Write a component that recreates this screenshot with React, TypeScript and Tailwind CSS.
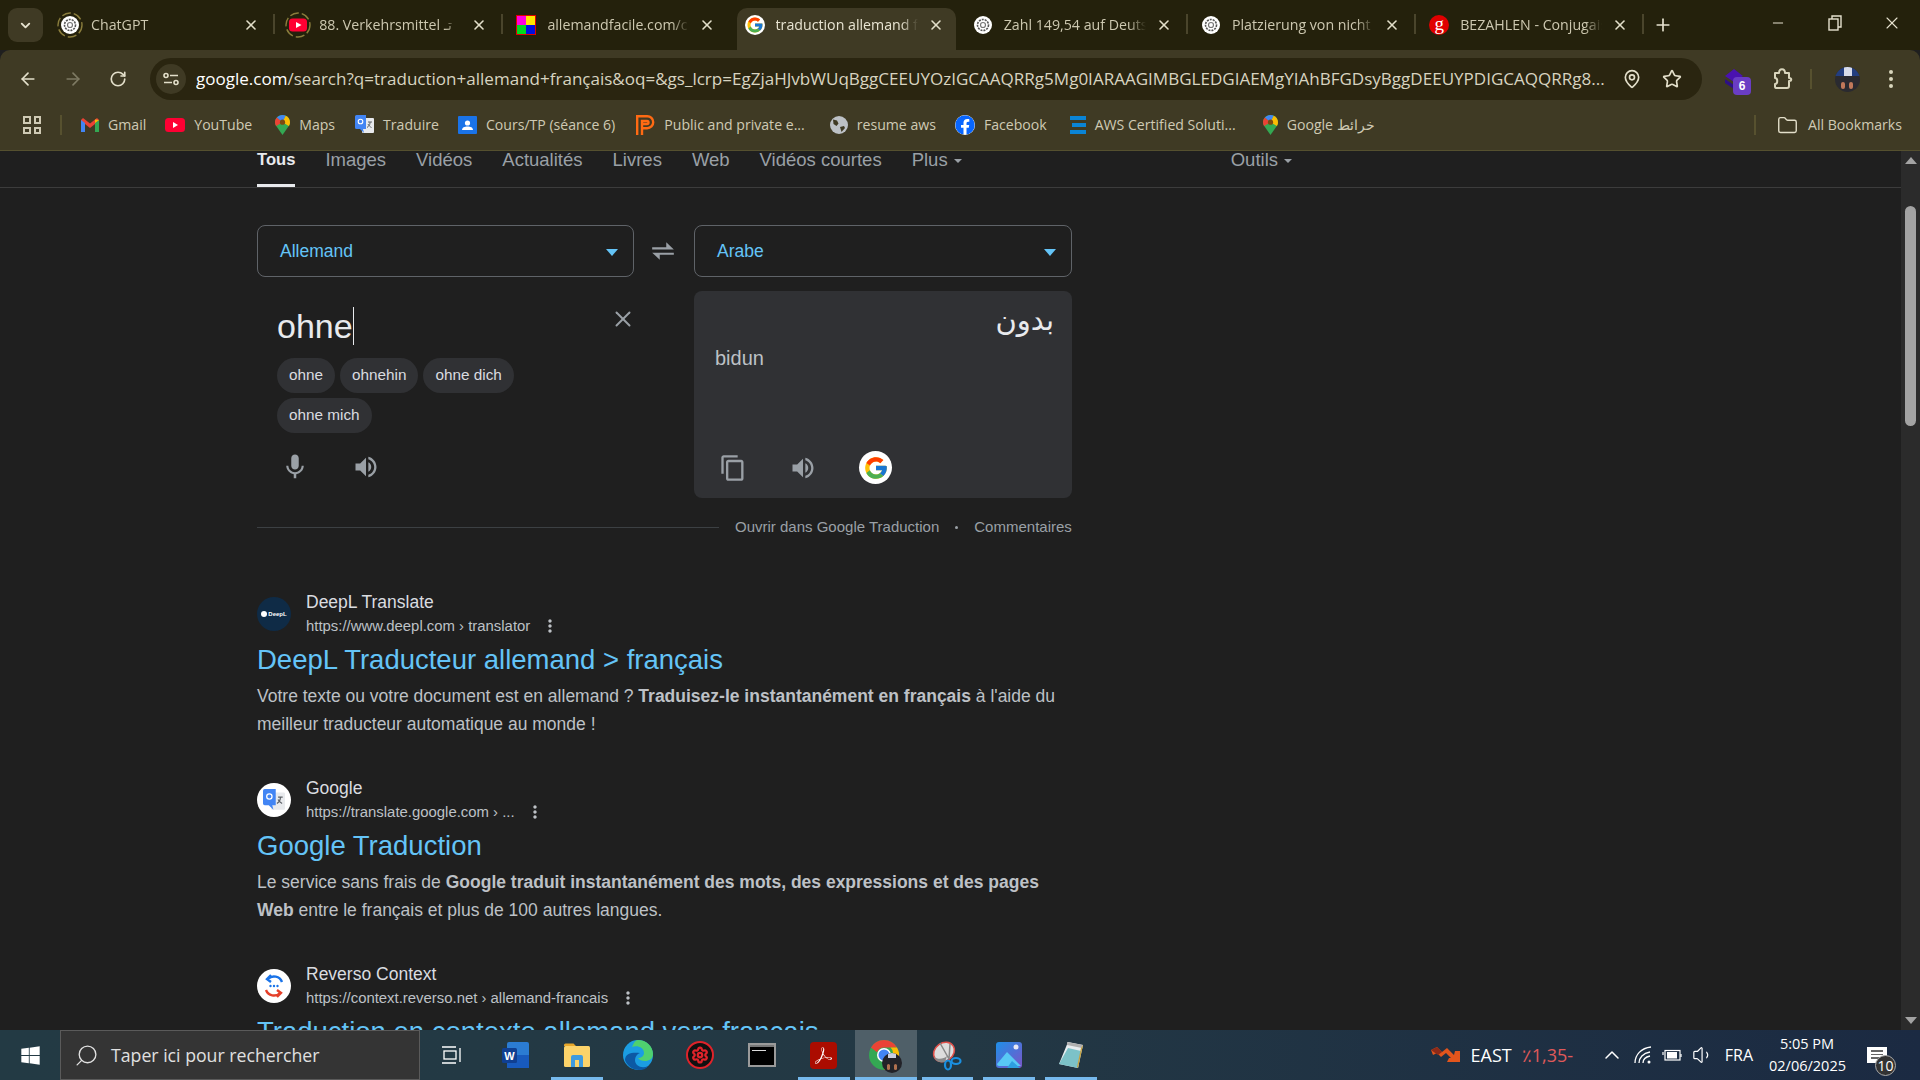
import { ArrowLeft, ArrowRight, ChevronDown, ChevronUp, Folder, MapPin, Minus, Plus, RotateCw, Search, Settings, Star, Volume1, X } from "lucide-react";
import type { ReactNode } from "react";
import { FaFacebook, FaWindows } from "react-icons/fa";
import { FcGoogle } from "react-icons/fc";
import { MdContentCopy, MdMic, MdMoreVert, MdVolumeUp } from "react-icons/md";
import { SiAdobeacrobatreader } from "react-icons/si";

const uiFont = "font-['Open_Sans',sans-serif]";

function GptFav({ ring }: { ring?: boolean }) {
  return (
    <svg width="26" height="26" viewBox="0 0 26 26">
      {ring && <circle cx="13" cy="13" r="12" fill="none" stroke="#8a7d3c" strokeWidth="1.4" strokeDasharray="9 3" />}
      <circle cx="13" cy="13" r="9" fill="#fff" />
      <circle cx="13" cy="13" r="5.5" fill="none" stroke="#555" strokeWidth="1.6" strokeDasharray="2 1" />
      <circle cx="13" cy="13" r="2.5" fill="none" stroke="#777" strokeWidth="1.2" />
    </svg>
  );
}

function YtFav({ ring }: { ring?: boolean }) {
  return (
    <svg width="26" height="26" viewBox="0 0 26 26">
      {ring && <circle cx="13" cy="13" r="12" fill="none" stroke="#8a7d3c" strokeWidth="1.4" strokeDasharray="9 3" />}
      <rect x="4" y="6.5" width="18" height="13" rx="3.5" fill="#ff0033" />
      <path d="M11 10l5.5 3-5.5 3z" fill="#fff" />
    </svg>
  );
}

function QuadFav() {
  return (
    <div className="grid h-[20px] w-[20px] grid-cols-2 border border-[#e00000] bg-[#e00000]">
      <div className="bg-[#ff00e0]" />
      <div className="bg-[#ffe600]" />
      <div className="bg-[#00d820]" />
      <div className="bg-[#0010e0]" />
    </div>
  );
}

function ConjFav() {
  return (
    <div className="flex h-[20px] w-[20px] items-center justify-center rounded-full bg-[#e00000] pb-[3px] font-['Liberation_Serif',serif] text-[19px] leading-none text-white">
      g
    </div>
  );
}

const tabs: { title: string; icon: ReactNode; active?: boolean }[] = [
  { title: "ChatGPT", icon: <GptFav ring /> },
  { title: "88. Verkehrsmittel تـ", icon: <YtFav ring /> },
  { title: "allemandfacile.com/c", icon: <QuadFav /> },
  { title: "traduction allemand f", icon: <FcGoogle size={20} className="rounded-full bg-white p-[1px]" />, active: true },
  { title: "Zahl 149,54 auf Deutsch", icon: <GptFav /> },
  { title: "Platzierung von nicht", icon: <GptFav /> },
  { title: "BEZAHLEN - Conjugaison", icon: <ConjFav /> },
];

function TabStrip() {
  return (
    <div className={`flex h-[50px] items-end bg-[#24210c] pl-2 text-[14.200px] ${uiFont}`}>
      <div className="mb-[8px] flex h-[34px] w-[35px] items-center justify-center rounded-[9px] bg-[#3f3a24] text-[#e6e2cf]">
        <ChevronDown size={15} strokeWidth={3} />
      </div>
      <div className="ml-[4px] flex h-[42px]">
        {tabs.map((t, i) => (
          <div key={i} className="relative flex h-full w-[228.2px] items-center pb-[8px]">
            {t.active && <div className="absolute inset-y-0 left-[5px] right-[4px] rounded-t-[10px] bg-[#3f3a24]" />}
            <div className="relative flex w-[44px] shrink-0 items-center justify-center pl-[2px]">{t.icon}</div>
            <div className={`relative w-[142px] overflow-hidden whitespace-nowrap [mask-image:linear-gradient(to_right,black_88%,transparent)] ${t.active ? "text-[#e8e4d2]" : "text-[#cdc8b0]"}`}>
              {t.title}
            </div>
            <X size={16} strokeWidth={2.4} className="relative ml-[10px] text-[#e3dfca]" />
            {i !== 2 && i !== 3 && <div className="absolute right-0 top-[6px] h-[20px] w-[2px] bg-[#4a452c]" />}
          </div>
        ))}
      </div>
      <div className="mb-[8px] ml-[9px] flex h-[34px] w-[20px] items-center justify-center text-[#e6e2cf]">
        <Plus size={20} strokeWidth={2} />
      </div>
      <div className="ml-auto flex h-[50px] items-center pb-[4px] text-[#e6e2cf]">
        <div className="flex w-[56.5px] justify-center"><Minus size={16} strokeWidth={1.5} /></div>
        <div className="flex w-[56.5px] justify-center">
          <svg width="14" height="16" viewBox="0 0 14 16" fill="none" stroke="currentColor" strokeWidth="1.4">
            <rect x="1" y="4" width="9" height="11" />
            <path d="M4 4V1h9v11h-3" />
          </svg>
        </div>
        <div className="flex w-[57px] justify-center"><X size={20} strokeWidth={1.3} /></div>
      </div>
    </div>
  );
}

function Toolbar() {
  return (
    <div className="flex h-[50px] items-end rounded-t-[10px] bg-[#3f3a24]">
      <div className="flex h-[42px] w-[150px] items-center text-[#e3dfca]">
        <div className="flex w-[55px] justify-center"><ArrowLeft size={20} /></div>
        <div className="flex w-[36px] justify-center text-[#7e7a63]"><ArrowRight size={20} /></div>
        <div className="flex w-[53px] justify-center"><RotateCw size={18} strokeWidth={2.2} /></div>
      </div>
      <div className={`flex h-[42px] w-[1552px] items-center rounded-full bg-[#2a2510] pl-[6px] pr-[20px] ${uiFont}`}>
        <div className="flex h-[30px] w-[30px] shrink-0 items-center justify-center rounded-full bg-[#3f3a24]">
          <svg width="16" height="14" viewBox="0 0 16 14" fill="none" stroke="#e3dfca" strokeWidth="1.6">
            <circle cx="3" cy="3.5" r="2" />
            <path d="M7 3.5h8M1 10.5h8" />
            <circle cx="13" cy="10.5" r="2" />
          </svg>
        </div>
        <div className="ml-[10px] w-[1410px] truncate text-[17.040px] text-[#d8d4c0]">
          <span className="text-white">google.com</span>
          /search?q=traduction+allemand+français&amp;oq=&amp;gs_lcrp=EgZjaHJvbWUqBggCEEUYOzIGCAAQRRg5Mg0IARAAGIMBGLEDGIAEMgYIAhBFGDsyBggDEEUYPDIGCAQQRRg8...
        </div>
        <MapPin size={20} className="ml-[16px] shrink-0 text-[#e3dfca]" />
        <Star size={20} className="ml-[20px] shrink-0 text-[#e3dfca]" />
      </div>
      <div className="flex h-[42px] flex-1 items-center text-[#d9d5bc]">
        <div className="relative ml-[20px] h-[30px] w-[30px]">
          <svg width="24" height="24" viewBox="0 0 24 24" className="absolute left-0 top-[3px]">
            <path d="M12 2l9 7-9 6-9-6z" fill="#4a12b0" />
            <path d="M3 12l9 6 4-2v4l-4 2-9-6z" fill="#2d0f85" />
          </svg>
          <div className="absolute left-[11px] top-[13px] flex h-[18px] w-[18px] items-center justify-center rounded-[4px] bg-[#6a3dc4] text-[12px] font-bold text-white">6</div>
        </div>
        <svg width="21" height="22" viewBox="0 0 21 22" fill="none" stroke="currentColor" strokeWidth="2" strokeLinejoin="round" className="ml-[20px]">
          <path d="M3 5h4c0-5 6-5 6 0h4v5c3 0 3 3 0 3v5a2 2 0 0 1-2 2H4a1.500 1.500 0 0 1-1-1.500V16c3 0 3-6 0-6z" />
        </svg>
        <div className="ml-[17px] h-[20px] w-[2px] bg-[#57512f]" />
        <div className="relative ml-[23px] h-[25px] w-[25px] overflow-hidden rounded-full bg-[#2a2a30]">
          <div className="h-[9px] bg-[#233e80]" />
          <div className="mx-auto -mt-[9px] h-[9px] w-[8px] bg-[#d8dcea]" />
          <div className="absolute bottom-[3px] left-[6px] h-[7px] w-[4px] rounded-full bg-[#c0785a]" />
          <div className="absolute bottom-[3px] left-[14px] h-[7px] w-[4px] rounded-full bg-[#c0785a]" />
        </div>
        <div className="ml-[29px] flex flex-col gap-[3px]">
          <div className="h-[4px] w-[4px] rounded-full bg-[#d9d5bc]" />
          <div className="h-[4px] w-[4px] rounded-full bg-[#d9d5bc]" />
          <div className="h-[4px] w-[4px] rounded-full bg-[#d9d5bc]" />
        </div>
      </div>
    </div>
  );
}

function MapsIcon() {
  return (
    <svg width="15" height="20" viewBox="0 0 15 20">
      <path d="M7.5 0C3.4 0 0 3.2 0 7.2c0 1.5.5 2.7 1.2 3.8L7.5 20l6.3-9c.7-1.1 1.2-2.3 1.2-3.8C15 3.2 11.6 0 7.5 0z" fill="#34a853" />
      <path d="M2 2.6L7.5 7.2 1.2 11C.5 9.9 0 8.7 0 7.2 0 5 1 3.3 2 2.6z" fill="#ea4335" />
      <path d="M2 2.6C3.4 1 5.4 0 7.5 0c1.2 0 2.2.3 3.2.8L7.5 7.2z" fill="#4285f4" />
      <path d="M10.7.8C13.2 2 15 4.4 15 7.2c0 1.5-.5 2.7-1.2 3.8L7.5 7.2z" fill="#fbbc04" />
      <circle cx="7.5" cy="7.2" r="2.6" fill="#7a4a12" />
    </svg>
  );
}

function TranslateIcon({ size = 19 }: { size?: number }) {
  return (
    <svg width={size} height={size} viewBox="0 0 19 19">
      <rect x="7" y="3" width="12" height="15" rx="1" fill="#e8eaed" />
      <path d="M13 7h4M15 7v1c0 2-1.5 3.5-3 4.5M13 9c.6 1.4 2 2.8 3.5 3.5" stroke="#5f6368" strokeWidth="1" fill="none" />
      <path d="M1.5 0H11v14H8l1 4-4-4H1.5A1.5 1.5 0 0 1 0 12.500v-11A1.500 1.500 0 0 1 1.500 0z" fill="#4285f4" />
      <circle cx="5.500" cy="6.500" r="2.300" fill="none" stroke="#fff" strokeWidth="1.100" />
    </svg>
  );
}

const bookmarks: { label: ReactNode; icon: ReactNode; ml: number }[] = [
  {
    label: "Gmail",
    ml: 19,
    icon: (
      <svg width="18" height="14" viewBox="0 0 18 14">
        <path d="M0 2v12h4V6l5 4 5-4v8h4V2l-2-2-7 5.500L2 0z" fill="#ea4335" />
        <path d="M0 2v12h4V5z" fill="#4285f4" />
        <path d="M14 5v9h4V2z" fill="#34a853" />
        <path d="M14 1.500l4 .5-4 3z" fill="#fbbc04" />
      </svg>
    ),
  },
  {
    label: "YouTube",
    ml: 19,
    icon: (
      <svg width="20" height="14" viewBox="0 0 20 14">
        <rect width="20" height="14" rx="3.500" fill="#ff0033" />
        <path d="M8 4l5 3-5 3z" fill="#fff" />
      </svg>
    ),
  },
  { label: "Maps", ml: 23, icon: <MapsIcon /> },
  { label: "Traduire", ml: 20, icon: <TranslateIcon /> },
  {
    label: "Cours/TP (séance 6)",
    ml: 19,
    icon: (
      <svg width="19" height="18" viewBox="0 0 19 18">
        <rect width="19" height="18" rx="1" fill="#1a73e8" />
        <circle cx="9.500" cy="7" r="2.600" fill="#fff" />
        <path d="M4 14c0-2.500 2.500-3.500 5.500-3.500S15 11.500 15 14z" fill="#fff" />
      </svg>
    ),
  },
  {
    label: "Public and private e...",
    ml: 21,
    icon: (
      <svg width="19" height="20" viewBox="0 0 19 20" fill="none" stroke="#ff6a13" strokeWidth="2.400">
        <path d="M1.200 20V1.200h10a6 6 0 0 1 0 12H6" />
        <path d="M6 20V6h5a1.500 1.500 0 0 1 0 3H6" />
      </svg>
    ),
  },
  {
    label: "resume aws",
    ml: 25,
    icon: (
      <svg width="18" height="18" viewBox="0 0 18 18">
        <circle cx="9" cy="9" r="9" fill="#bdc1c6" />
        <path d="M3 3.500l4 1 1.500 3-2 2.500-3-2zM10 11l4-1 1 2-3.500 4z" fill="#3f3a24" />
      </svg>
    ),
  },
  {
    label: "Facebook",
    ml: 19,
    icon: <FaFacebook size={20} className="rounded-full bg-white text-[#0866ff]" />,
  },
  {
    label: "AWS Certified Soluti...",
    ml: 23,
    icon: (
      <div className="flex h-[18px] w-[16px] flex-col justify-between">
        <div className="h-[4px] bg-[#0a84d6]" />
        <div className="ml-[2px] h-[4px] bg-[#0a84d6]" />
        <div className="h-[4px] bg-[#0a84d6]" />
      </div>
    ),
  },
  { label: "Google خرائط", ml: 27, icon: <MapsIcon /> },
];

function BookmarksBar() {
  return (
    <div className={`flex h-[51px] items-center border-b border-[#55502f] bg-[#3f3a24] text-[14.100px] text-[#cfcab4] ${uiFont}`}>
      <div className="ml-[23px] grid h-[18px] w-[18px] grid-cols-2 gap-[3px]">
        <div className="border-[2px] border-[#cfcab4]" />
        <div className="border-[2px] border-[#cfcab4]" />
        <div className="border-[2px] border-[#cfcab4]" />
        <div className="border-[2px] border-[#cfcab4]" />
      </div>
      <div className="ml-[19px] h-[20px] w-[2px] bg-[#57512f]" />
      {bookmarks.map((b, i) => (
        <div key={i} className="flex items-center gap-[9px] whitespace-nowrap" style={{ marginLeft: b.ml }}>
          <div className="flex h-[20px] items-center">{b.icon}</div>
          <span>{b.label}</span>
        </div>
      ))}
      <div className="ml-auto h-[20px] w-[2px] bg-[#57512f]" />
      <Folder size={21} strokeWidth={1.6} className="ml-[21px] text-[#e3dfca]" />
      <span className="ml-[10px] mr-[18px]">All Bookmarks</span>
    </div>
  );
}

function SearchNav() {
  const items = ["Images", "Vidéos", "Actualités", "Livres", "Web", "Vidéos courtes"];
  return (
    <div className="flow-root h-[37px] border-b border-[#3c3c3c]">
      <div className="-mt-[1px] ml-[257px] flex h-[38px] w-[1035px] gap-[30px] text-[18.500px] leading-[20px] text-[#9aa0a6]">
        <div className="h-[37px] border-b-[3px] border-[#e8eaed] text-[16.600px] font-bold text-[#e8eaed]">Tous</div>
        {items.map((s) => (
          <div key={s}>{s}</div>
        ))}
        <div className="flex items-start gap-[6px]">
          Plus
          <div className="mt-[9px] h-0 w-0 border-x-[4px] border-t-[4px] border-x-transparent border-t-[#9aa0a6]" />
        </div>
        <div className="ml-auto flex items-start gap-[6px]">
          Outils
          <div className="mt-[9px] h-0 w-0 border-x-[4px] border-t-[4px] border-x-transparent border-t-[#9aa0a6]" />
        </div>
      </div>
    </div>
  );
}

function LangSelect({ label, className }: { label: string; className: string }) {
  return (
    <div className={`flex h-[52px] items-center justify-between rounded-[8px] border border-[#5f6368] pl-[22px] pr-[15px] text-[17.500px] text-[#64c4f7] ${className}`}>
      {label}
      <div className="mt-[3px] h-0 w-0 border-x-[6px] border-t-[7px] border-x-transparent border-t-[#64c4f7]" />
    </div>
  );
}

function Chip({ text }: { text: string }) {
  return <div className="flex h-[35px] items-center rounded-full bg-[#303134] px-[12px] text-[15.300px] text-[#dadce0]">{text}</div>;
}

function TranslateCard() {
  return (
    <div className="w-[815px] pt-[37px]">
      <div className="flex items-center">
        <LangSelect label="Allemand" className="w-[377px]" />
        <div className="flex w-[60px] justify-center pr-[2px] text-[#9aa0a6]">
          <svg width="26" height="24" viewBox="0 0 24 22" fill="currentColor">
            <path d="M2 7.500h13V3l7 6.500H2z" />
            <path d="M22 14.500H9V19l-7-6.500h20z" />
          </svg>
        </div>
        <LangSelect label="Arabe" className="w-[378px]" />
      </div>
      <div className="mt-[14px] flex h-[207px]">
        <div className="relative w-[437px] pl-[20px]">
          <div className="flex h-[54px] items-end">
            <div className="flex h-[38px] items-center border-r border-[#e8eaed] text-[34px] leading-none text-[#e8eaed]">ohne</div>
          </div>
          <X size={26} strokeWidth={1.8} className="absolute left-[353px] top-[15px] text-[#9aa0a6]" />
          <div className="mt-[13px] flex w-[300px] flex-wrap gap-x-[5px] gap-y-[5px]">
            <Chip text="ohne" />
            <Chip text="ohnehin" />
            <Chip text="ohne dich" />
            <Chip text="ohne mich" />
          </div>
          <div className="mt-[19px] flex items-center text-[#9aa0a6]">
            <MdMic size={30} className="ml-[3px]" />
            <MdVolumeUp size={28} className="ml-[42px]" />
          </div>
        </div>
        <div className="flex w-[378px] flex-col rounded-[8px] bg-[#303134] pl-[21px] pr-[18px]">
          <div dir="rtl" className="mt-[7px] h-[44px] font-['Liberation_Sans','DejaVu_Sans',sans-serif] text-[29px] leading-[44px] text-[#e8eaed]">بدون</div>
          <div className="mt-[4px] text-[20px] leading-[24px] text-[#bdc1c6]">bidun</div>
          <div className="ml-[4px] mt-[81px] flex items-center text-[#9aa0a6]">
            <MdContentCopy size={28} />
            <MdVolumeUp size={28} className="ml-[42px]" />
            <div className="ml-[42px] flex h-[33px] w-[33px] items-center justify-center rounded-full bg-white">
              <FcGoogle size={26} />
            </div>
          </div>
        </div>
      </div>
      <div className="mt-[18px] flex h-[22px] items-center text-[15px] text-[#9aa0a6]">
        <div className="h-px w-[462px] bg-[#3c4043]" />
        <span className="ml-[16px]">Ouvrir dans Google Traduction</span>
        <div className="ml-[16px] h-[3px] w-[3px] rounded-full bg-[#9aa0a6]" />
        <span className="ml-[16px]">Commentaires</span>
      </div>
    </div>
  );
}

function ReversoFav() {
  return (
    <svg width="24" height="24" viewBox="0 0 24 24" fill="none" strokeWidth="2.400">
      <path d="M20 8a8.500 8.500 0 0 0-14-3M9 1L5 5l4 3" stroke="#1a73e8" />
      <path d="M4 16a8.500 8.500 0 0 0 14 3M15 23l4-4-4-3" stroke="#e5402a" />
      <circle cx="8.500" cy="12" r="1.200" fill="#1a73e8" stroke="none" />
      <circle cx="12" cy="12" r="1.200" fill="#1a73e8" stroke="none" />
      <circle cx="15.500" cy="12" r="1.200" fill="#1a73e8" stroke="none" />
    </svg>
  );
}

type ResultProps = { name: string; url: string; title: string; fav: ReactNode; favBg: string; snippet?: ReactNode };

function Result({ name, url, title, fav, favBg, snippet }: ResultProps) {
  return (
    <div className="mb-[38px] w-[815px]">
      <div className="flex h-[48px] items-center">
        <div className={`flex h-[34px] w-[34px] items-center justify-center overflow-hidden rounded-full ${favBg}`}>{fav}</div>
        <div className="ml-[15px]">
          <div className="h-[24px] text-[17.500px] leading-[24px] text-[#dadce0]">{name}</div>
          <div className="flex h-[24px] items-center text-[14.900px] text-[#bdc1c6]">
            {url}
            <MdMoreVert size={20} className="ml-[10px] text-[#bdc1c6]" />
          </div>
        </div>
      </div>
      <div className="mt-[2px] h-[40px] text-[27.500px] leading-[40px] text-[#64c4f7]">{title}</div>
      {snippet && <div className="mt-[2px] text-[17.500px] leading-[28px] text-[#bdc1c6]">{snippet}</div>}
    </div>
  );
}

function Scrollbar() {
  return (
    <div className="relative w-[19px] shrink-0 bg-[#2b2b2b]">
      <div className="absolute left-[4px] top-[6px] h-0 w-0 border-x-[6px] border-b-[7px] border-x-transparent border-b-[#a3a3a3]" />
      <div className="absolute left-[4px] top-[55px] h-[220px] w-[11px] rounded-full bg-[#a3a3a3]" />
      <div className="absolute bottom-[6px] left-[4px] h-0 w-0 border-x-[6px] border-t-[7px] border-x-transparent border-t-[#a3a3a3]" />
    </div>
  );
}

function WordIcon() {
  return (
    <svg width="30" height="30" viewBox="0 0 30 30">
      <rect x="7" y="2" width="22" height="26" rx="2" fill="#2b7cd3" />
      <rect x="7" y="15" width="22" height="13" fill="#185abd" />
      <rect x="2" y="8" width="15" height="15" rx="1.500" fill="#103f91" />
      <text x="9.500" y="20" textAnchor="middle" fontSize="11" fontWeight="700" fill="#fff" fontFamily="Liberation Sans">W</text>
    </svg>
  );
}

function FilesIcon() {
  return (
    <svg width="28" height="26" viewBox="0 0 28 26">
      <path d="M1 3a1.500 1.500 0 0 1 1.500-1.500h8L13 4h-12z" fill="#e8a72a" />
      <rect x="1" y="4" width="26" height="21" rx="1.500" fill="#fcd36a" />
      <path d="M8 25V15a2 2 0 0 1 2-2h8a2 2 0 0 1 2 2v10h-4v-7h-4v7z" fill="#3f9be0" />
    </svg>
  );
}

function EdgeIcon() {
  return (
    <svg width="30" height="30" viewBox="0 0 30 30">
      <circle cx="15" cy="15" r="15" fill="#1b9de2" />
      <path d="M15 0c8 0 15 6 15 14 0 5-4 7-8 7-3 0-6-1-7-3 3 0 6-2 6-5 0-5-6-8-12-6C11 3 12 0 15 0z" fill="#4fd06f" />
      <path d="M2 20c2 6 8 10 14 10 4 0 7-1 9-4-6 3-13 0-13-6 0-3 2-6 5-7-7-1-15 0-15 7z" fill="#0c59a4" />
    </svg>
  );
}

function GearIcon() {
  return (
    <div className="flex h-[28px] w-[28px] items-center justify-center rounded-full border-[2px] border-[#e0232a] bg-[#111]">
      <Settings size={18} strokeWidth={3} className="text-[#e0232a]" />
    </div>
  );
}

function TerminalIcon() {
  return (
    <div className="h-[24px] w-[28px] border-[2px] border-[#9a9a9a] bg-black">
      <div className="h-[2px] bg-[#777]" />
      <div className="ml-[2px] mt-[3px] h-[1px] w-[14px] bg-[#ddd]" />
    </div>
  );
}

function PdfIcon() {
  return (
    <div className="flex h-[27px] w-[27px] items-center justify-center rounded-[4px] bg-[#ab0c00] text-white">
      <SiAdobeacrobatreader size={17} />
    </div>
  );
}

function ChromeIcon() {
  return (
    <div className="relative h-[30px] w-[34px]">
      <svg width="30" height="30" viewBox="0 0 30 30">
        <circle cx="15" cy="15" r="15" fill="#34a853" />
        <path d="M15 0a15 15 0 0 1 13 7.500H15a7.500 7.500 0 0 0-7 4.700L2 7.500A15 15 0 0 1 15 0z" fill="#ea4335" />
        <path d="M28 7.500A15 15 0 0 1 15 30l6.500-11.200a7.500 7.500 0 0 0 0-11.300z" fill="#fbbc04" />
        <circle cx="15" cy="15" r="7" fill="#fff" />
        <circle cx="15" cy="15" r="5.500" fill="#4285f4" />
      </svg>
      <div className="absolute bottom-[-3px] right-[1px] h-[20px] w-[20px] overflow-hidden rounded-full bg-[#222228]">
        <div className="mx-auto h-[5px] w-[8px] bg-[#c9cfe0]" />
        <div className="mt-[6px] flex justify-center gap-[4px]">
          <div className="h-[6px] w-[3px] rounded-full bg-[#b0704f]" />
          <div className="h-[6px] w-[3px] rounded-full bg-[#b0704f]" />
        </div>
      </div>
    </div>
  );
}

function SnipIcon() {
  return (
    <svg width="30" height="32" viewBox="0 0 30 32" fill="none">
      <ellipse cx="12" cy="13" rx="11" ry="9" transform="rotate(-35 12 13)" fill="#ddd" stroke="#e0504a" strokeWidth="1.500" />
      <path d="M2 18c4 3 10 2 13-1l-2 6c-4 1-9 0-11-5z" fill="#8a8a8a" />
      <path d="M8 4l9 16M18 5l-1 15" stroke="#888" strokeWidth="1.500" />
      <ellipse cx="16" cy="26" rx="3" ry="4.500" stroke="#1a8fe0" strokeWidth="2.200" />
      <ellipse cx="24" cy="22" rx="4.500" ry="3" stroke="#1a8fe0" strokeWidth="2.200" />
    </svg>
  );
}

function PhotosIcon() {
  return (
    <svg width="26" height="26" viewBox="0 0 26 26">
      <defs>
        <linearGradient id="ph" x1="0" y1="0" x2="1" y2="1">
          <stop offset="0" stopColor="#1e90e8" />
          <stop offset="1" stopColor="#7a55c8" />
        </linearGradient>
      </defs>
      <rect width="26" height="26" rx="3" fill="url(#ph)" />
      <circle cx="20" cy="5" r="2.500" fill="#e8e8f5" />
      <path d="M1 22l10-12 14 14H3a2 2 0 0 1-2-2z" fill="#58c8f5" />
      <path d="M11 26l5-7 8 7z" fill="#2e9fe0" />
    </svg>
  );
}

function NotepadIcon() {
  return (
    <svg width="28" height="30" viewBox="0 0 28 30">
      <path d="M11 2l15 3-5 23L2 24z" fill="#e8edf0" />
      <path d="M2 24L11 8l13 3-3 17z" fill="#7cc2c8" />
      <path d="M10 2l16 3-1 3L10 5z" fill="#b0b0b0" />
      <path d="M24 8l2-3-5 23-1-1z" fill="#c9a23c" />
    </svg>
  );
}

const taskApps: { icon: ReactNode; open?: boolean; active?: boolean }[] = [
  { icon: <WordIcon /> },
  { icon: <FilesIcon />, open: true },
  { icon: <EdgeIcon /> },
  { icon: <GearIcon /> },
  { icon: <TerminalIcon /> },
  { icon: <PdfIcon />, open: true },
  { icon: <ChromeIcon />, open: true, active: true },
  { icon: <SnipIcon />, open: true },
  { icon: <PhotosIcon />, open: true },
  { icon: <NotepadIcon />, open: true },
];

function Taskbar() {
  return (
    <div className={`flex h-[50px] bg-linear-to-r from-[#233a44] via-[#233844] to-[#1b2a42] ${uiFont}`}>
      <div className="flex w-[60px] items-center justify-center text-white">
        <FaWindows size={21} />
      </div>
      <div className="flex w-[360px] items-center border border-[#5a5a5a] bg-[#343434] pl-[13px] text-[#e0e0e0]">
        <Search size={25} strokeWidth={1.300} className="-scale-x-100" />
        <span className="ml-[12px] text-[17.700px]">Taper ici pour rechercher</span>
      </div>
      <div className="flex w-[64px] items-center justify-center text-white">
        <svg width="20" height="20" viewBox="0 0 20 20" fill="none" stroke="currentColor" strokeWidth="1.300">
          <rect x="2" y="6" width="12" height="8" />
          <path d="M0 2h14M0 18h14M18 3v14" />
        </svg>
      </div>
      {taskApps.map((a, i) => (
        <div key={i} className={`relative flex w-[61.800px] items-center justify-center ${a.active ? "bg-[#4f5f68]" : ""}`}>
          {a.icon}
          {a.open && <div className={`absolute bottom-0 h-[3px] bg-[#76b9ed] ${a.active ? "inset-x-0" : "left-[5px] right-[5px]"}`} />}
        </div>
      ))}
      <div className="ml-auto flex items-center text-white">
        <svg width="30" height="18" viewBox="0 0 30 18">
          <path d="M0 4l6-3 5 5 5-4 7 7 1-4h5v11H16l2-4h2l-5-5-5 4-4-4-4 2z" fill="#e2551c" />
          <path d="M0 4l6-3 5 5-4 3z" fill="#8e2a18" />
        </svg>
        <span className="ml-[10px] text-[18px]">EAST</span>
        <span className="ml-[10px] w-[50px] whitespace-nowrap text-[18px] text-[#e05a5a]">٪1,35-</span>
        <ChevronUp size={24} strokeWidth={1.500} className="ml-[28px]" />
        <svg width="20" height="18" viewBox="0 0 20 18" fill="none" stroke="currentColor" strokeWidth="1.300" className="ml-[10px]">
          <path d="M1 17C1 9 7 2 17 1M5 17c0-5 4-10 11-11M9 17c0-3 2-6 7-7" />
          <circle cx="15" cy="16" r="1.500" fill="currentColor" stroke="none" />
        </svg>
        <svg width="20" height="12" viewBox="0 0 20 12" fill="none" stroke="currentColor" strokeWidth="1.200" className="ml-[8px]">
          <rect x="3" y="1.500" width="15" height="9.500" />
          <rect x="5" y="3" width="10" height="6.500" fill="currentColor" stroke="none" />
          <path d="M1 3v3M19 5v3" />
        </svg>
        <Volume1 size={22} strokeWidth={1.300} className="ml-[10px]" />
        <span className="ml-[11px] text-[16px]">FRA</span>
        <div className="ml-[16px] w-[76px] text-center text-[14.500px] leading-[22px]">
          <div>5:05 PM</div>
          <div className="whitespace-nowrap">02/06/2025</div>
        </div>
        <div className="relative ml-[22px] mr-[33px] h-[16px] w-[20px] bg-white">
          <div className="mx-[4px] mt-[3px] h-[1.500px] bg-[#666]" />
          <div className="mx-[4px] mt-[2px] h-[1.500px] bg-[#666]" />
          <div className="mx-[4px] mt-[2px] h-[1.500px] bg-[#666]" />
          <div className="absolute left-[8px] top-[8px] flex h-[21px] w-[21px] items-center justify-center rounded-full border border-[#aaa] bg-[#333] text-[14px] text-white">10</div>
        </div>
      </div>
    </div>
  );
}

export default function App() {
  return (
    <div className="flex h-[1080px] w-[1920px] flex-col overflow-hidden bg-[#1f1f1f] font-['Liberation_Sans',sans-serif]">
      <TabStrip />
      <Toolbar />
      <BookmarksBar />
      <div className="flex min-h-0 flex-1">
        <div className="min-w-0 flex-1 overflow-hidden">
          <SearchNav />
          <div className="pl-[257px]">
            <TranslateCard />
            <div className="pt-[52px]">
              <Result
                name="DeepL Translate"
                url="https://www.deepl.com › translator"
                title="DeepL Traducteur allemand > français"
                favBg="bg-[#0f2b46]"
                fav={
                  <div className="flex items-center gap-[1px]">
                    <div className="h-[6px] w-[6px] rounded-full bg-white" />
                    <span className="text-[6px] font-bold text-white">DeepL</span>
                  </div>
                }
                snippet={
                  <>
                    Votre texte ou votre document est en allemand ? <b>Traduisez-le instantanément en français</b> à l&apos;aide du
                    <br />
                    meilleur traducteur automatique au monde !
                  </>
                }
              />
              <Result
                name="Google"
                url="https://translate.google.com › ..."
                title="Google Traduction"
                favBg="bg-white"
                fav={<TranslateIcon size={22} />}
                snippet={
                  <>
                    Le service sans frais de <b>Google traduit instantanément des mots, des expressions et des pages</b>
                    <br />
                    <b>Web</b> entre le français et plus de 100 autres langues.
                  </>
                }
              />
              <Result
                name="Reverso Context"
                url="https://context.reverso.net › allemand-francais"
                title="Traduction en contexte allemand vers français"
                favBg="bg-white"
                fav={<ReversoFav />}
              />
            </div>
          </div>
        </div>
        <Scrollbar />
      </div>
      <Taskbar />
    </div>
  );
}
